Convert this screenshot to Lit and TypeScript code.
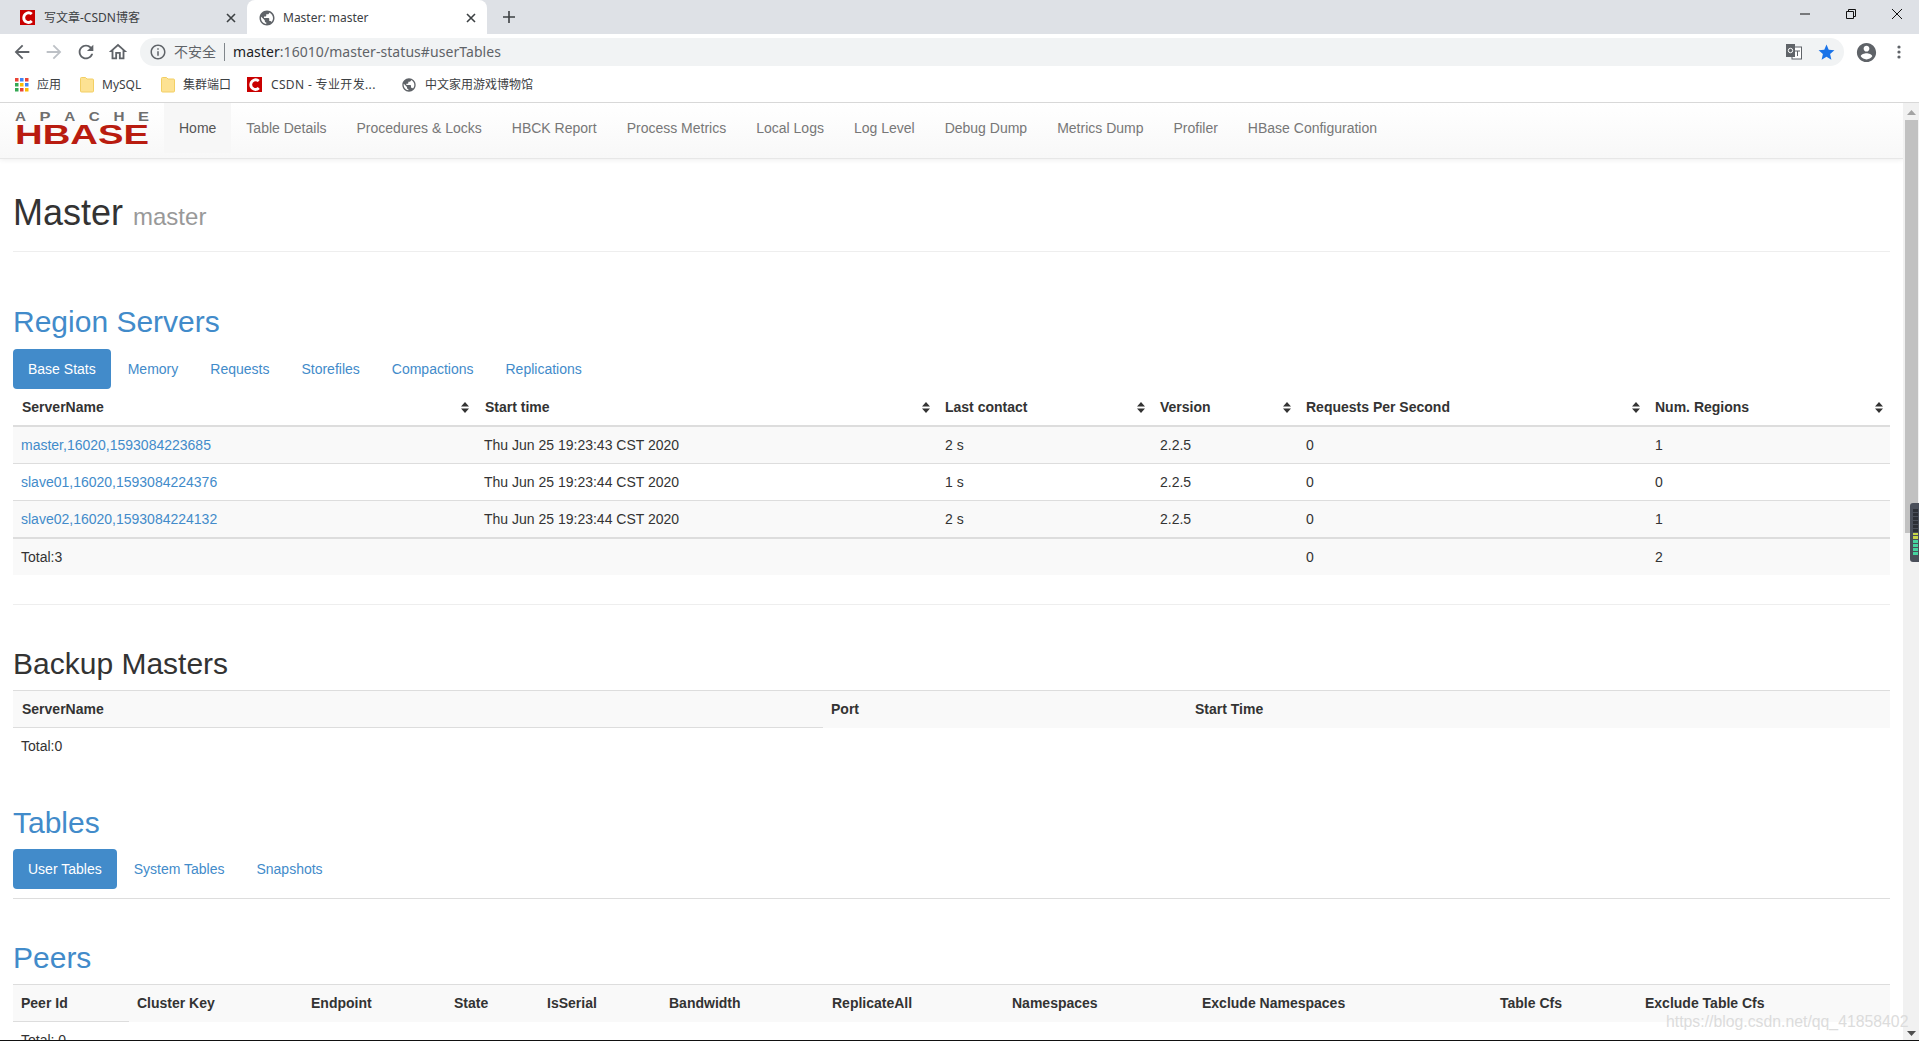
import { LitElement, html, css, svg } from "lit";
import { customElement } from "lit/decorators.js";

const P = {
  globe: "M12 2C6.48 2 2 6.48 2 12s4.48 10 10 10 10-4.48 10-10S17.52 2 12 2zm-1 17.93c-3.95-.49-7-3.85-7-7.93 0-.62.08-1.21.21-1.79L9 15v1c0 1.1.9 2 2 2v1.93zm6.9-2.54c-.26-.81-1-1.39-1.9-1.39h-1v-3c0-.55-.45-1-1-1H8v-2h2c.55 0 1-.45 1-1V7h2c1.1 0 2-.9 2-2v-.41c2.93 1.19 5 4.06 5 7.41 0 2.08-.8 3.97-2.1 5.39z",
  back: "M20 11H7.83l5.59-5.59L12 4l-8 8 8 8 1.41-1.41L7.83 13H20v-2z",
  fwd: "M12 4l-1.41 1.41L16.17 11H4v2h12.17l-5.58 5.59L12 20l8-8z",
  reload: "M17.65 6.35C16.2 4.9 14.21 4 12 4c-4.42 0-7.99 3.58-7.99 8s3.57 8 7.99 8c3.73 0 6.84-2.55 7.73-6h-2.08c-.82 2.33-3.04 4-5.65 4-3.31 0-6-2.69-6-6s2.69-6 6-6c1.66 0 3.14.69 4.22 1.78L13 11h7V4l-2.35 2.35z",
  home: "M12 5.69l5 4.5V18h-2v-6H9v6H7v-7.81l5-4.5M12 3L2 12h3v8h6v-6h2v6h6v-8h3L12 3z",
  info: "M11 7h2v2h-2zm0 4h2v6h-2zm1-9C6.48 2 2 6.48 2 12s4.48 10 10 10 10-4.48 10-10S17.52 2 12 2zm0 18c-4.41 0-8-3.59-8-8s3.59-8 8-8 8 3.59 8 8-3.59 8-8 8z",
  star: "M12 17.27L18.18 21l-1.64-7.03L22 9.24l-7.19-.61L12 2 9.19 8.63 2 9.24l5.46 4.73L5.82 21z",
  user: "M12 2C6.48 2 2 6.48 2 12s4.48 10 10 10 10-4.48 10-10S17.52 2 12 2zm0 3c1.66 0 3 1.34 3 3s-1.34 3-3 3-3-1.34-3-3 1.34-3 3-3zm0 14.2c-2.5 0-4.71-1.28-6-3.22.03-1.99 4-3.08 6-3.08 1.99 0 5.97 1.09 6 3.08-1.29 1.94-3.5 3.22-6 3.22z",
};

const icon = (d: string, cls: string) =>
  html`<svg class=${cls} viewBox="0 0 24 24"><path d=${d}></path></svg>`;
const csdn = html`<svg class="fav" viewBox="0 0 16 16"><rect width="16" height="16" fill="#c90000"></rect><path d="M12.6 4.3A5.2 5.2 0 0 0 4 8a5 5 0 0 0 8.6 3.7" fill="none" stroke="#fff" stroke-width="3"></path></svg>`;
const folder = html`<svg class="folder" viewBox="0 0 14 16"><path d="M.5 1.5a1 1 0 0 1 1-1h4l1.5 1.5h5.500a1 1 0 0 1 1 1v11a1 1 0 0 1-1 1h-11a1 1 0 0 1-1-1z" fill="#fde293" stroke="#f2cf64"></path></svg>`;
const closeX = html`<svg class="x" viewBox="0 0 10 10"><path d="M1 1l8 8M9 1l-8 8" stroke="#3c4043" stroke-width="1.6" fill="none"></path></svg>`;
const sort = html`<svg class="sort" viewBox="0 0 8 11"><path d="M4 0l4 4.500H0zM4 11L0 6.500h8z" fill="#333"></path></svg>`;

const NAV = ["Home", "Table Details", "Procedures & Locks", "HBCK Report", "Process Metrics", "Local Logs", "Log Level", "Debug Dump", "Metrics Dump", "Profiler", "HBase Configuration"];

const RS_COLS = [463, 461, 215, 146, 349, 243];
const RS_HEAD = ["ServerName", "Start time", "Last contact", "Version", "Requests Per Second", "Num. Regions"];
const RS_ROWS = [
  ["master,16020,1593084223685", "Thu Jun 25 19:23:43 CST 2020", "2 s", "2.2.5", "0", "1"],
  ["slave01,16020,1593084224376", "Thu Jun 25 19:23:44 CST 2020", "1 s", "2.2.5", "0", "0"],
  ["slave02,16020,1593084224132", "Thu Jun 25 19:23:44 CST 2020", "2 s", "2.2.5", "0", "1"],
];
const PEER_COLS = [116, 174, 143, 93, 122, 163, 180, 190, 298, 145, 253];
const PEER_HEAD = ["Peer Id", "Cluster Key", "Endpoint", "State", "IsSerial", "Bandwidth", "ReplicateAll", "Namespaces", "Exclude Namespaces", "Table Cfs", "Exclude Table Cfs"];
const APACHE = ["A", "P", "A", "C", "H", "E"];

const cols = (w: number[]) => html`<colgroup>${w.map((v) => html`<col style="width:${v}px" />`)}</colgroup>`;

@customElement("app-root")
export class AppRoot extends LitElement {
  static styles = css`
    :host { display: block; position: relative; width: 1919px; height: 1041px; overflow: hidden; background: #fff; font-family: "Liberation Sans", Arial, sans-serif; font-size: 14px; line-height: 20px; color: #333; }
    * { box-sizing: border-box; }
    .page { display: flex; flex-direction: column; height: 1040px; }
    .cjk { font-family: "Noto Sans", "Noto Sans CJK SC", sans-serif; }

    .tabstrip { display: flex; height: 34px; background: #dee1e6; flex: none; align-items: stretch; }
    .tab { display: flex; align-items: center; font-size: 12px; color: #3c4043; position: relative; padding-top: 1px; }
    .tab.off { width: 247px; padding-left: 20px; }
    .tab.on { width: 240px; padding-left: 11px; background: #fff; border-radius: 8px 8px 0 0; }
    .tab .label { flex: 1; margin-left: 9px; }
    .tab.on .label { margin-left: 7px; }
    .fav { width: 15px; height: 15px; flex: none; }
    .tab .gl { width: 18px; height: 18px; fill: #5f6368; flex: none; }
    .x { width: 10px; height: 10px; flex: none; margin-right: 11px; }
    .plus { width: 44px; display: flex; align-items: center; justify-content: center; }
    .plus svg { width: 12px; height: 12px; }
    .win { margin-left: auto; display: flex; align-items: center; height: 28px; padding-right: 16px; }
    .win svg { width: 12px; height: 12px; margin-left: 34px; }

    .toolbar { display: flex; align-items: center; height: 36px; background: #fff; padding-left: 6px; flex: none; }
    .btn { width: 32px; display: flex; justify-content: center; }
    .btn svg { width: 22px; height: 22px; fill: #5f6368; }
    .btn svg.dim { fill: #bdc1c6; }
    .pill { margin-left: 6px; width: 1704px; height: 28px; border-radius: 14px; background: #f1f3f4; display: flex; align-items: center; padding-left: 9px; }
    .pill .i { width: 18px; height: 18px; fill: #5f6368; flex: none; }
    .insecure { font-size: 14px; color: #5f6368; margin-left: 7px; }
    .sep { width: 1px; height: 18px; background: #80868b; margin: 0 8px 0 8px; }
    .url { font-family: "Noto Sans", sans-serif; font-size: 14px; color: #5f6368; letter-spacing: 0.06px; }
    .url b { font-weight: 400; color: #202124; }
    .pr { margin-left: auto; display: flex; align-items: center; padding-right: 8px; }
    .trans { width: 16px; height: 16px; margin-right: 15px; }
    .star { width: 19px; height: 19px; fill: #1a73e8; }
    .user { width: 23px; height: 23px; fill: #5f6368; margin-left: 11px; }
    .dots { width: 4px; height: 14px; margin-left: 19px; }

    .bookmarks { display: flex; align-items: center; height: 33px; flex: none; padding: 0 0 3px 15px; background: #fff; border-bottom: 1px solid #d8d8d8; font-size: 12px; color: #3c4043; }
    .bm { display: flex; align-items: center; }
    .w65 { width: 65px; } .w81 { width: 81px; } .w86 { width: 86px; } .w154 { width: 154px; }
    .bm .apps { width: 14px; height: 14px; margin-right: 8px; }
    .folder { width: 14px; height: 16px; margin-right: 8px; flex: none; }
    .bm .fav { margin-right: 9px; }
    .bm .gl { width: 16px; height: 16px; fill: #5f6368; margin-right: 8px; }
    .wide { letter-spacing: 0.35px; }

    .body { flex: 1; display: flex; min-height: 0; }
    .content { flex: 1; min-width: 0; overflow: hidden; }
    .scroll { width: 16px; flex: none; background: #f1f1f1; position: relative; padding: 17px 1px 0 2px; }
    .thumb { height: 413px; background: #c1c1c1; }
    .arr { position: absolute; left: 4px; width: 9px; height: 5px; fill: #a3a3a3; }
    .arr.up { top: 7px; }
    .arr.dn { bottom: 4px; fill: #505050; }

    .navbar { height: 56px; padding-left: 15px; display: flex; align-items: flex-start; background: linear-gradient(#fff, #f8f8f8); border-bottom: 1px solid #e7e7e7; box-shadow: 0 1px 5px rgba(0,0,0,.07); }
    .logo { width: 135px; height: 44px; margin-top: 3px; margin-right: 14px; flex: none; overflow: visible; }
    .navbar a { display: block; padding: 15px; color: #777; white-space: nowrap; }
    .navbar a.active { color: #555; background: #f7f7f7; }

    main { padding: 0 13px; }
    .hdr { padding: 34px 0 18px; border-bottom: 1px solid #eee; }
    h1 { margin: 0; font-size: 36px; line-height: 40px; font-weight: 500; color: #333; }
    h1 small { font-size: 24px; line-height: 1; color: #999; font-weight: 400; }
    h2 { margin: 0; font-size: 30px; line-height: 33px; font-weight: 500; color: #333; }
    h2.blue { color: #428bca; }
    .rs { margin-top: 53px; margin-bottom: 11px; }
    .bk { margin-top: 42px; margin-bottom: 10px; }
    .tb { margin-top: 42px; margin-bottom: 10px; }
    .pe { margin-top: 42px; margin-bottom: 10px; }
    .pills { display: flex; gap: 2px; }
    .pills.line { border-bottom: 1px solid #ddd; padding-bottom: 9px; }
    .pills a { display: block; padding: 10px 15px; border-radius: 4px; color: #428bca; }
    .pills a.active { background: #428bca; color: #fff; }

    table { width: 1877px; table-layout: fixed; border-collapse: collapse; }
    th, td { padding: 8px; text-align: left; vertical-align: top; white-space: nowrap; }
    th { font-weight: 700; }
    td a { color: #428bca; }
    .th-in { display: flex; justify-content: space-between; align-items: center; }
    .sort { width: 8px; height: 11px; margin-right: -1px; flex: none; }
    .grid thead th { border-bottom: 2px solid #ddd; }
    .grid thead th:nth-child(-n+2) { padding-left: 9px; }
    .grid td { border-top: 1px solid #ddd; }
    .grid tr.st td { background: #f9f9f9; }
    .grid tr.tot td { border-top: 2px solid #ddd; background: #f9f9f9; }
    .plain { border-top: 1px solid #ddd; }
    .plain th { background: #f9f9f9; }
    .plain th.ul { border-bottom: 1px solid #ddd; }
    .plain td { background: #fff; }
    .backup th.ul { padding-left: 9px; }
    hr { margin: 29px 0 0; border: 0; border-top: 1px solid #eee; }

    .bottom { height: 1px; background: #111; }
    .water { position: absolute; left: 1666px; top: 1012px; font-size: 15.800px; color: #dcdcdc; pointer-events: none; white-space: nowrap; }
    .widget { position: absolute; left: 1910px; top: 503px; width: 9px; height: 59px; background: #4a4f5a; border-radius: 3px 0 0 3px; display: flex; flex-direction: column; gap: 1px; padding: 6px 1px 7px 3px; }
    .widget i { flex: 1; display: block; background: #2c2f36; }
    .widget i.y { background: #c8d64a; }
    .widget i.g { background: #47d3a0; }
  `;

  private logo() {
    return svg`
      ${APACHE.map((c, i) => svg`<text x=${i * 24.6} y="14.500" font-size="13" font-family="Liberation Sans" font-weight="700" fill="#6e6e6e" textLength="11" lengthAdjust="spacingAndGlyphs">${c}</text>`)}
      <text x="0" y="38" font-size="28.500" font-family="Liberation Sans" font-weight="700" fill="#b91c10" textLength="134" lengthAdjust="spacingAndGlyphs">HBASE</text>`;
  }

  render() {
    return html`
      <div class="page">
        <div class="tabstrip">
          <div class="tab off">${csdn}<span class="label cjk">写文章-CSDN博客</span>${closeX}</div>
          <div class="tab on">${icon(P.globe, "gl")}<span class="label cjk">Master: master</span>${closeX}</div>
          <div class="plus"><svg viewBox="0 0 12 12"><path d="M6 0v12M0 6h12" stroke="#3c4043" stroke-width="1.600"></path></svg></div>
          <div class="win">
            <svg viewBox="0 0 12 12"><path d="M1 6h10" stroke="#111" stroke-width="1"></path></svg>
            <svg viewBox="0 0 12 12"><path d="M1.500 3.500h7v7h-7zM3.500 3.500v-2h7v7h-2" fill="none" stroke="#111"></path></svg>
            <svg viewBox="0 0 12 12"><path d="M1 1l10 10M11 1L1 11" stroke="#111"></path></svg>
          </div>
        </div>
        <div class="toolbar">
          <div class="btn">${icon(P.back, "")}</div>
          <div class="btn">${icon(P.fwd, "dim")}</div>
          <div class="btn">${icon(P.reload, "")}</div>
          <div class="btn">${icon(P.home, "")}</div>
          <div class="pill">
            ${icon(P.info, "i")}
            <span class="insecure cjk">不安全</span><span class="sep"></span>
            <span class="url"><b>master</b>:16010/master-status#userTables</span>
            <div class="pr">
              <svg class="trans" viewBox="0 0 16 16"><rect x="6" y="3" width="9.500" height="12" fill="#fff" stroke="#5f6368"></rect><path d="M0 0h9v13H0z" fill="#5f6368"></path><circle cx="4.500" cy="6.500" r="2.200" fill="none" stroke="#fff"></circle><path d="M9 7h5M11.500 7v5" stroke="#5f6368" fill="none"></path></svg>
              ${icon(P.star, "star")}
            </div>
          </div>
          ${icon(P.user, "user")}
          <svg class="dots" viewBox="0 0 4 14"><circle cx="2" cy="2" r="1.600" fill="#5f6368"></circle><circle cx="2" cy="7" r="1.600" fill="#5f6368"></circle><circle cx="2" cy="12" r="1.600" fill="#5f6368"></circle></svg>
        </div>
        <div class="bookmarks">
          <div class="bm w65">
            <svg class="apps" viewBox="0 0 14 14">
              <rect x="0" y="0" width="3.500" height="3.500" fill="#ea4335"></rect><rect x="5" y="0" width="3.500" height="3.500" fill="#4285f4"></rect><rect x="10" y="0" width="3.500" height="3.500" fill="#ea4335"></rect>
              <rect x="0" y="5" width="3.500" height="3.500" fill="#34a853"></rect><rect x="5" y="5" width="3.500" height="3.500" fill="#fbbc05"></rect><rect x="10" y="5" width="3.500" height="3.500" fill="#4285f4"></rect>
              <rect x="0" y="10" width="3.500" height="3.500" fill="#34a853"></rect><rect x="5" y="10" width="3.500" height="3.500" fill="#ea4335"></rect><rect x="10" y="10" width="3.500" height="3.500" fill="#fbbc05"></rect>
            </svg>
            <span class="cjk">应用</span>
          </div>
          <div class="bm w81">${folder}<span class="cjk">MySQL</span></div>
          <div class="bm w86">${folder}<span class="cjk">集群端口</span></div>
          <div class="bm w154">${csdn}<span class="cjk wide">CSDN - 专业开发...</span></div>
          <div class="bm">${icon(P.globe, "gl")}<span class="cjk">中文家用游戏博物馆</span></div>
        </div>
        <div class="body">
          <div class="content">
            <nav class="navbar">
              <svg class="logo" viewBox="0 0 135 44">${this.logo()}</svg>
              ${NAV.map((n, i) => html`<a class=${i === 0 ? "active" : ""}>${n}</a>`)}
            </nav>
            <main>
              <div class="hdr"><h1>Master <small>master</small></h1></div>
              <h2 class="blue rs">Region Servers</h2>
              <div class="pills">
                ${["Base Stats", "Memory", "Requests", "Storefiles", "Compactions", "Replications"].map((t, i) => html`<a class=${i === 0 ? "active" : ""}>${t}</a>`)}
              </div>
              <table class="grid">
                ${cols(RS_COLS)}
                <thead><tr>${RS_HEAD.map((h) => html`<th><div class="th-in"><span>${h}</span>${sort}</div></th>`)}</tr></thead>
                <tbody>
                  ${RS_ROWS.map((r, i) => html`<tr class=${i % 2 === 0 ? "st" : ""}>${r.map((c, j) => html`<td>${j === 0 ? html`<a>${c}</a>` : c}</td>`)}</tr>`)}
                  <tr class="tot"><td>Total:3</td><td></td><td></td><td></td><td>0</td><td>2</td></tr>
                </tbody>
              </table>
              <hr />
              <h2 class="bk">Backup Masters</h2>
              <table class="plain backup">
                ${cols([810, 364, 703])}
                <thead><tr><th class="ul">ServerName</th><th>Port</th><th>Start Time</th></tr></thead>
                <tbody><tr><td colspan="3">Total:0</td></tr></tbody>
              </table>
              <h2 class="blue tb">Tables</h2>
              <div class="pills line">
                ${["User Tables", "System Tables", "Snapshots"].map((t, i) => html`<a class=${i === 0 ? "active" : ""}>${t}</a>`)}
              </div>
              <h2 class="blue pe">Peers</h2>
              <table class="plain">
                ${cols(PEER_COLS)}
                <thead><tr>${PEER_HEAD.map((h, i) => html`<th class=${i === 0 ? "ul" : ""}>${h}</th>`)}</tr></thead>
                <tbody><tr><td colspan="11">Total: 0</td></tr></tbody>
              </table>
            </main>
          </div>
          <div class="scroll">
            <svg class="arr up" viewBox="0 0 9 5"><path d="M4.500 0L9 5H0z"></path></svg>
            <div class="thumb"></div>
            <svg class="arr dn" viewBox="0 0 9 5"><path d="M0 0h9L4.500 5z"></path></svg>
          </div>
        </div>
      </div>
      <div class="bottom"></div>
      <div class="water">https://blog.csdn.net/qq_41858402</div>
      <div class="widget">
        ${Array.from({ length: 12 }, (_, i) => html`<i class=${i < 6 ? "" : i < 8 ? "y" : "g"}></i>`)}
      </div>
    `;
  }
}
